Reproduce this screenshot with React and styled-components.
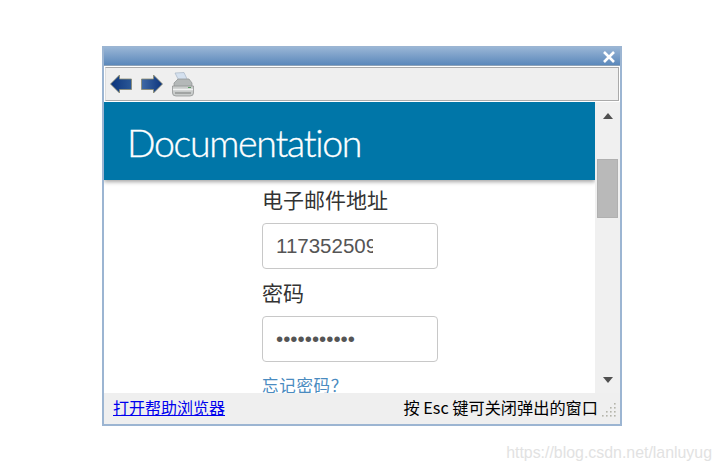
import React from "react";
import styled, { createGlobalStyle } from "styled-components";

const Global = createGlobalStyle`
  html, body { margin: 0; padding: 0; background: #fff; }
  #root { width: 721px; height: 470px; overflow: hidden; }
`;

const Page = styled.div`
  position: relative;
  width: 721px;
  height: 470px;
  padding: 46px 0 0 102px;
  box-sizing: border-box;
  background: #fff;
`;

const Dialog = styled.div`
  width: 520px;
  height: 380px;
  box-sizing: border-box;
  border: 2px solid #9cb5d2;
  border-top-width: 1px;
  display: flex;
  flex-direction: column;
  background: #fff;
`;

const TitleBar = styled.div`
  height: 19px;
  flex: none;
  display: flex;
  justify-content: flex-end;
  align-items: center;
  padding: 2px 4px 0 0;
  background: linear-gradient(#9ab6d6, #5b88bb);
  border-bottom: 1px solid #8ea3b8;
  box-sizing: border-box;
`;

const Toolbar = styled.div`
  height: 34px;
  flex: none;
  box-sizing: border-box;
  margin: 1px 1px 1px 1px;
  border: 1px solid #aaa;
  border-left: 1px solid #ddd;
  background: #efefef;
  display: flex;
  align-items: center;
  gap: 9px;
  padding: 0 0 0 4px;
`;

const Main = styled.div`
  flex: 1;
  min-height: 0;
  display: flex;
`;

const Scroller = styled.div`
  flex: 1;
  min-width: 0;
  overflow: hidden;
  background: #fff;
`;

const Banner = styled.div`
  height: 78px;
  box-sizing: border-box;
  background: #0076a8;
  box-shadow: 0 2px 4px rgba(0, 0, 0, 0.35);
  color: #fff;
  font-family: "Lato", "Liberation Sans", sans-serif;
  font-weight: 300;
  font-size: 37.5px;
  font-variant-ligatures: none;
  letter-spacing: -1.3px;
  -webkit-text-stroke: 0.35px #fff;
  line-height: 82px;
  padding-left: 23px;
`;

const Form = styled.form`
  margin: 0 0 0 158px;
  padding-top: 7px;
  width: 176px;
`;

const Label = styled.label`
  display: block;
  font-family: "Noto Sans CJK SC", serif;
  font-size: 21px;
  line-height: 24px;
  height: 24px;
  color: #333;
  margin-top: ${(p) => p.$top || 0}px;
  margin-bottom: ${(p) => p.$bottom || 0}px;
`;

const Input = styled.input`
  display: block;
  width: 176px;
  height: 46px;
  box-sizing: border-box;
  border: 1px solid #c8c8c8;
  border-radius: 4px;
  padding: 0 64px 0 13px;
  font-family: "Liberation Sans", sans-serif;
  font-size: 20.5px;
  color: #555;
  background: #fff;
  outline: none;
`;

const ForgotLink = styled.a`
  display: block;
  margin-top: 12px;
  font-family: "Noto Sans CJK SC", sans-serif;
  font-size: 16.5px;
  letter-spacing: 0.7px;
  line-height: 22px;
  color: #4a8bc0;
  text-decoration: none;
`;

const ScrollTrack = styled.div`
  width: 25px;
  flex: none;
  background: #f0f0f0;
  display: flex;
  flex-direction: column;
  align-items: center;
`;

const Arrow = styled.div`
  width: 0;
  height: 0;
  border-left: 5px solid transparent;
  border-right: 5px solid transparent;
  ${(p) => (p.$down ? "border-top: 6px solid #505050;" : "border-bottom: 6px solid #505050;")}
  margin-top: ${(p) => p.$top}px;
`;

const Thumb = styled.div`
  width: 21px;
  height: 59px;
  margin-top: 40px;
  background: #b9b9b9;
  border: 1px solid #b0b0b0;
  box-sizing: border-box;
`;

const Footer = styled.div`
  height: 31px;
  flex: none;
  box-sizing: border-box;
  background: #efefef;
  display: flex;
  align-items: center;
  justify-content: space-between;
  padding: 0 4px 3px 9px;
  font-family: "Noto Sans CJK SC", "Liberation Sans", sans-serif;
  font-size: 16px;
  color: #000;
`;

const HelpLink = styled.a`
  color: #0000ee;
  text-decoration: underline;
  font-size: 16px;
`;

const Hint = styled.div`
  display: flex;
  align-items: center;
  gap: 4px;
  font-size: 16.2px;
`;

const GripSlot = styled.span`
  display: block;
  margin-top: 5px;
`;

const Watermark = styled.div`
  position: absolute;
  right: 9px;
  top: 444px;
  font-family: "Liberation Sans", sans-serif;
  font-size: 15.9px;
  line-height: 18px;
  color: #e2e2e2;
`;

const Icon = styled.svg`
  display: block;
  flex: none;
`;

const Close = () => (
  <Icon width="14" height="12" viewBox="0 0 14 12">
    <path d="M2 1 L12 11 M12 1 L2 11" stroke="#fff" strokeWidth="2.6" fill="none" />
  </Icon>
);

const NavArrow = ({ flip }) => (
  <Icon width="22" height="20" viewBox="0 0 22 20" style={flip ? { transform: "scaleX(-1)" } : undefined}>
    <defs>
      <linearGradient id={flip ? "af" : "ab"} x1="0" y1="0" x2="1" y2="0">
        <stop offset="0" stopColor="#0c347c" />
        <stop offset="1" stopColor={flip ? "#3f6aa6" : "#2a5796"} />
      </linearGradient>
    </defs>
    <path d="M0.5 10 L9.5 1 V5 H21.5 V15.5 H9.5 V19 Z" fill={`url(#${flip ? "af" : "ab"})`} stroke="#8c8a6e" strokeWidth="0.8" strokeLinejoin="round" />
  </Icon>
);

const Printer = () => (
  <Icon width="22" height="25" viewBox="0 0 22 25">
    <path d="M3 1 L12 0.5 L16 9 H7 Z" fill="#d4e0ee" stroke="#a9b6c4" strokeWidth="0.7" />
    <path d="M2 11 L6 7 H17 L20 11 V15 H2 Z" fill="#b4b8b8" stroke="#8d9190" strokeWidth="0.7" />
    <path d="M0.5 14 H21.5 V21 Q21.5 24 18 24 H4 Q0.5 24 0.5 21 Z" fill="#c9cccb" stroke="#8a8d8c" strokeWidth="0.7" />
    <path d="M1 17.5 H21" stroke="#f0f2f1" strokeWidth="1.5" />
    <path d="M3 21 H19" stroke="#8b8e8d" strokeWidth="1.3" />
    <path d="M16 15.5 h3" stroke="#5a9a62" strokeWidth="1" />
  </Icon>
);

const Grip = () => (
  <Icon width="14" height="14" viewBox="0 0 14 14">
    {[[11, 1], [7, 5], [11, 5], [3, 9], [7, 9], [11, 9], [-1, 13], [3, 13], [7, 13], [11, 13]].map(([x, y]) => (
      <rect key={`${x}-${y}`} x={x + 1} y={y - 1} width="1.6" height="1.6" fill="#b4b4aa" />
    ))}
  </Icon>
);

export default function App() {
  return (
    <>
      <Global />
      <Page>
        <Dialog>
          <TitleBar>
            <Close />
          </TitleBar>
          <Toolbar>
            <NavArrow />
            <NavArrow flip />
            <Printer />
          </Toolbar>
          <Main>
            <Scroller>
              <Banner>Documentation</Banner>
              <Form onSubmit={(e) => e.preventDefault()}>
                <Label $bottom={12}>电子邮件地址</Label>
                <Input readOnly value="117352509@qq.com" />
                <Label $top={11} $bottom={12}>密码</Label>
                <Input readOnly type="password" value="12345678901" />
                <ForgotLink href="#">忘记密码？</ForgotLink>
              </Form>
            </Scroller>
            <ScrollTrack>
              <Arrow $top={11} />
              <Thumb />
              <Arrow $down $top={159} />
            </ScrollTrack>
          </Main>
          <Footer>
            <HelpLink href="#">打开帮助浏览器</HelpLink>
            <Hint>
              <span>按 Esc 键可关闭弹出的窗口</span>
              <GripSlot>
                <Grip />
              </GripSlot>
            </Hint>
          </Footer>
        </Dialog>
        <Watermark>https://blog.csdn.net/lanluyug</Watermark>
      </Page>
    </>
  );
}
